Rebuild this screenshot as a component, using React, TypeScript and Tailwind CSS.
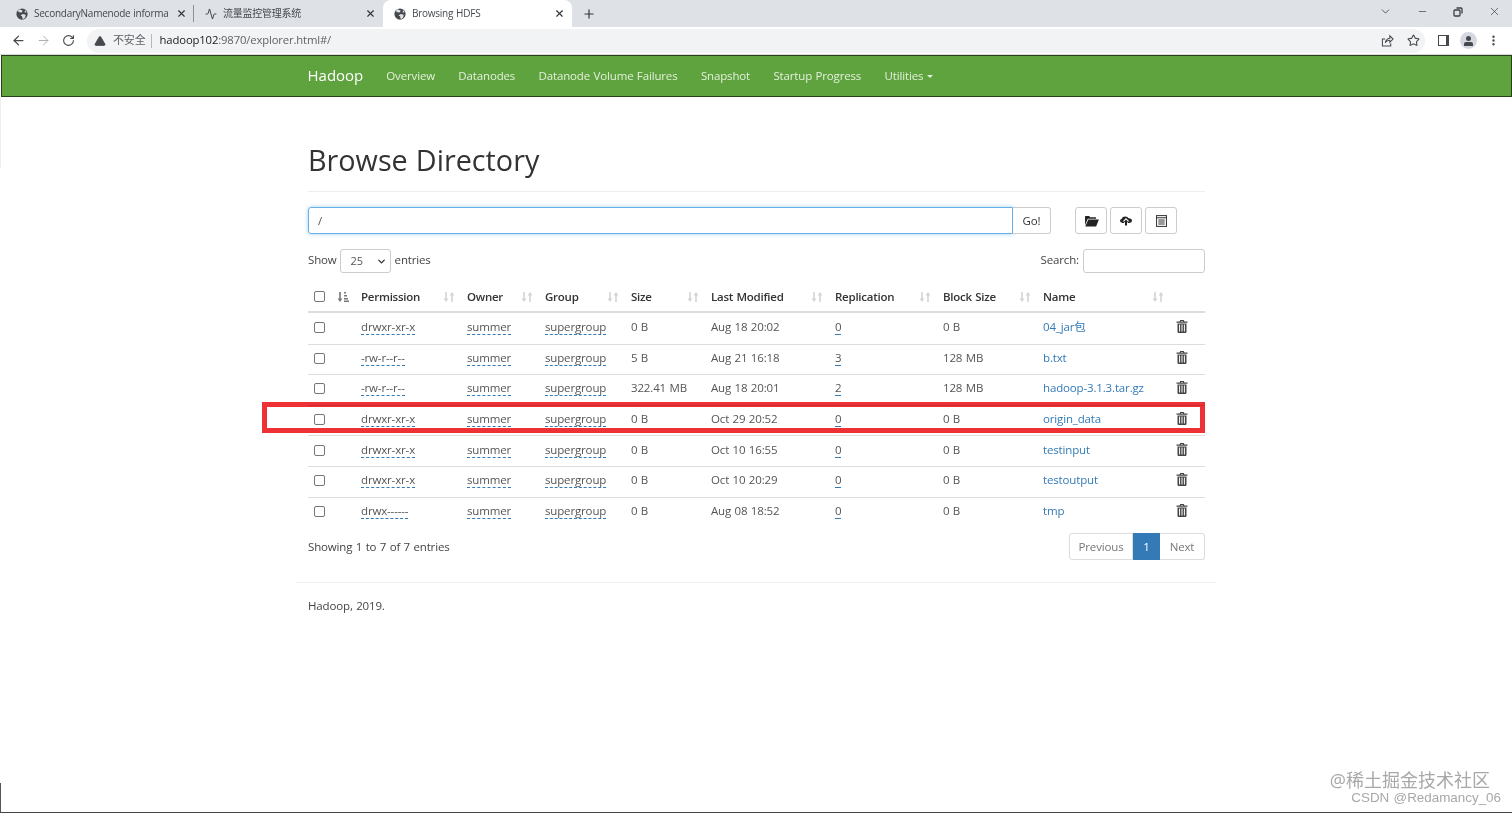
import React from 'react';
import { ArrowLeft, ArrowRight, RotateCw, TriangleAlert, Plus, X, ChevronDown, Minus, Star, EllipsisVertical, Activity } from 'lucide-react';

const files = [
  { perm: 'drwxr-xr-x', size: '0 B', modified: 'Aug 18 20:02', repl: '0', block: '0 B', name: '04_jar包' },
  { perm: '-rw-r--r--', size: '5 B', modified: 'Aug 21 16:18', repl: '3', block: '128 MB', name: 'b.txt' },
  { perm: '-rw-r--r--', size: '322.41 MB', modified: 'Aug 18 20:01', repl: '2', block: '128 MB', name: 'hadoop-3.1.3.tar.gz' },
  { perm: 'drwxr-xr-x', size: '0 B', modified: 'Oct 29 20:52', repl: '0', block: '0 B', name: 'origin_data' },
  { perm: 'drwxr-xr-x', size: '0 B', modified: 'Oct 10 16:55', repl: '0', block: '0 B', name: 'testinput' },
  { perm: 'drwxr-xr-x', size: '0 B', modified: 'Oct 10 20:29', repl: '0', block: '0 B', name: 'testoutput' },
  { perm: 'drwx------', size: '0 B', modified: 'Aug 08 18:52', repl: '0', block: '0 B', name: 'tmp' },
];

const columns = 'grid grid-cols-[45px_106px_78px_86px_80px_124px_108px_100px_133px_37px] items-center';

const Globe = () => (
  <svg viewBox="0 0 16 16" className="w-[12px] h-[12px] shrink-0">
    <circle cx="8" cy="8" r="7.5" fill="#45494e" />
    <path d="M5 1.5 9 3.5 7.5 6 4.5 5.5 2 4ZM9 8l4 1-1 4-3 2-1-4-2-1ZM12 2.5l2.5 3-3 .5Z" fill="#dee1e6" />
  </svg>
);

const Tab = ({ title, active, icon }: { title: string; active?: boolean; icon: React.ReactNode }) => (
  <div className={`w-[189px] h-[27px] flex items-center pl-[11px] pr-[7px] gap-[6px] ${active ? 'bg-white rounded-t-lg' : ''}`}>
    {icon}
    <span className="flex-1 -mr-[6px] text-[10px] tracking-[-0.25px] text-[#45494e] overflow-hidden whitespace-nowrap">{title}</span>
    <X size={11} strokeWidth={2.5} className="text-[#33363a] shrink-0" />
  </div>
);

const SortIcon = ({ active }: { active?: boolean }) => (
  <svg viewBox="0 0 12 12" className={`w-[12px] h-[12px] ${active ? 'text-[#777]' : 'text-[#d4d4d4]'}`} fill="currentColor">
    <path d="M2.2 1h1.6v6.5H5.4L3 11 .6 7.5h1.6Z" />
    {active ? (
      <path d="M7 1h2v1.5H7ZM7 4h3v1.5H7ZM7 7h4v1.5H7ZM7 9.6h5V11H7Z" />
    ) : (
      <path d="M8.2 11H9.8V4.5h1.6L9 1 6.6 4.5h1.6Z" />
    )}
  </svg>
);

const Trash = () => (
  <svg viewBox="0 0 12 13" className="w-[12px] h-[13px] text-[#444]" fill="currentColor">
    <path d="M4.2 0h3.6l.6 1.4H11.5v1.4H.5V1.4h3.1ZM5 .9l-.2.5h2.4L7 .9Z" />
    <path d="M1.5 3.4h9v8.4q0 1.2-1.2 1.2H2.7q-1.2 0-1.2-1.2ZM3.1 4.6v7h1v-7ZM5.5 4.6v7h1v-7ZM7.9 4.6v7h1v-7Z" fillRule="evenodd" />
  </svg>
);

const Dashed = ({ children }: { children: React.ReactNode }) => (
  <span className="border-b border-dashed border-[#337ab7] leading-[14px]">{children}</span>
);

const Checkbox = ({ className = '' }: { className?: string }) => (
  <span className={`block w-[11px] h-[11px] ml-[6px] rounded-[2px] border border-[#767676] bg-white ${className}`} />
);

const ToolButton = ({ children }: { children: React.ReactNode }) => (
  <button className="h-[27px] w-[32px] flex items-center justify-center rounded-[3px] border border-[#ccc] bg-white">
    {children}
  </button>
);

export default function App() {
  return (
    <div className="relative min-h-[813px] bg-white text-[11.5px] tracking-[-0.15px] [word-spacing:0.6px] text-[#333] font-['Open_Sans','Noto_Sans_CJK_SC',sans-serif] overflow-hidden">
      {/* Tab strip */}
      <div className="h-[27px] bg-[#dee1e6] flex items-center pl-[5px]">
        <Tab title="SecondaryNamenode informa" icon={<Globe />} />
        <div className="w-px h-[17px] bg-[#8d9095] -ml-[1px]" />
        <Tab title="流量监控管理系统" icon={<Activity size={12} className="text-[#45494e] shrink-0" />} />
        <Tab title="Browsing HDFS" active icon={<Globe />} />
        <Plus size={14} strokeWidth={2} className="text-[#33363a] ml-[10px]" />
        <div className="ml-auto flex items-center gap-[25px] pr-[11px] pb-[4px] text-[#3b3e42]">
          <ChevronDown size={13} strokeWidth={1.5} />
          <Minus size={11} strokeWidth={1.5} />
          <svg viewBox="0 0 10 10" className="w-[10px] h-[10px]" fill="none" stroke="currentColor" strokeWidth="1.3">
            <rect x="1" y="3" width="6" height="6" rx="1" />
            <path d="M3.5 1H8q1 0 1 1v4.5" />
          </svg>
          <X size={13} strokeWidth={1.3} />
        </div>
      </div>

      {/* Address bar */}
      <div className="h-[28px] bg-white border-b border-[#d5d7da] flex items-center pl-[11px] pr-[12px] text-[#5f6368]">
        <ArrowLeft size={15} strokeWidth={2} className="text-[#45494e]" />
        <ArrowRight size={15} strokeWidth={1.5} className="ml-[10px] text-[#a9abae]" />
        <RotateCw size={13} strokeWidth={2} className="ml-[11px] text-[#45494e]" />
        <div className="ml-[12px] w-[1338px] h-[24px] rounded-full bg-[#f1f3f4] flex items-center pl-[7px] pr-[5px]">
          <TriangleAlert size={12} fill="#45494e" strokeWidth={1.5} className="text-[#45494e]" />
          <span className="ml-[7px] text-[11px]">不安全</span>
          <span className="ml-[5px] mr-[8px] w-px h-[14px] bg-[#b5b7ba]" />
          <span className="text-[11.3px]"><span className="text-[#202124]">hadoop102</span>:9870/explorer.html#/</span>
          <div className="ml-auto flex items-center gap-[13px] text-[#45494e]">
            <svg viewBox="0 0 14 14" className="w-[13px] h-[13px]" fill="none" stroke="currentColor" strokeWidth="1.1">
              <path d="M4 6v-.5H1.5v7.5h9v-3" />
              <path d="M4.5 9.5C5 6 8 4.5 9.5 4.5V2L13 5.5 9.5 9V6.8C7.5 6.8 5.5 8 4.5 9.5Z" />
            </svg>
            <Star size={13} strokeWidth={2} />
          </div>
        </div>
        <div className="ml-[13px] w-[11px] h-[11px] border-[1.5px] border-[#45494e] flex justify-start">
          <div className="w-[7px] h-full bg-white" />
          <div className="flex-1 bg-[#45494e]" />
        </div>
        <div className="ml-[11px] w-[17px] h-[17px] rounded-full bg-[#d5d8e0] flex flex-col items-center justify-center">
          <span className="w-[5px] h-[5px] rounded-full bg-[#45494e]" />
          <span className="w-[9px] h-[4px] mt-px rounded-t-[2px] bg-[#45494e]" />
        </div>
        <EllipsisVertical size={13} strokeWidth={2.4} className="ml-[10px] text-[#45494e]" />
      </div>

      {/* Hadoop navbar */}
      <nav className="h-[42px] ml-px bg-[#5fa33e] border border-[#26401a] text-[#e4efdd]">
        <div className="w-[920px] mx-auto px-3 h-full flex items-center -translate-x-px">
          <span className="text-[15px] -mt-px tracking-normal text-white">Hadoop</span>
          <div className="ml-[23px] flex items-center gap-[23.4px]">
            <span>Overview</span>
            <span>Datanodes</span>
            <span>Datanode Volume Failures</span>
            <span>Snapshot</span>
            <span>Startup Progress</span>
            <span className="flex items-center gap-[4px]">
              Utilities
              <span className="border-x-[3px] border-x-transparent border-t-[3px] border-t-[#e4efdd]" />
            </span>
          </div>
        </div>
      </nav>

      <main className="w-[920px] mx-auto pl-3 pr-[11px]">
        <div className="pt-[41px] pb-[9px] border-b border-[#eee]">
          <h1 className="text-[28.75px] leading-[44px] tracking-normal text-[#333]">Browse Directory</h1>
        </div>

        {/* Path input and actions */}
        <div className="mt-[15px] flex items-center">
          <div className="w-[705px] h-[27px] rounded-l-[3px] border border-[#66afe9] shadow-[0_0_4px_rgba(102,175,233,0.6)] flex items-center pl-[9px] text-[#555]">
            /
          </div>
          <button className="w-[38px] h-[27px] rounded-r-[3px] border border-l-0 border-[#ccc] text-[#333] bg-white">Go!</button>
          <div className="ml-[24px] flex gap-[3px]">
            <ToolButton>
              <svg viewBox="0 0 16 13" className="w-[15px] h-[12px] text-[#222]" fill="currentColor">
                <path d="M1 3V1.5Q1 1 1.5 1h4l1 1.5h6q.5 0 .5.5v1H4L1 11Z" />
                <path d="M4.6 5H16l-3 7.5H1.3Z" />
              </svg>
            </ToolButton>
            <ToolButton>
              <svg viewBox="0 0 16 13" className="w-[12px] h-[12px] text-[#222]" fill="currentColor">
                <path d="M3.5 9Q0 9 0 6.2 0 4 2.2 3.7 3 .5 7 .5q3.4 0 4.4 2.4Q16 3 16 6.3 16 9 12.5 9H10.4V7h2.1L8 2.5 3.5 7h2.1v2Z" />
                <path d="M8 4.5 11 7.8H9.4V12.5H6.6V7.8H5Z" />
              </svg>
            </ToolButton>
            <ToolButton>
              <svg viewBox="0 0 12 13" className="w-[11px] h-[12px] text-[#333]" fill="none" stroke="currentColor">
                <rect x=".6" y=".6" width="10.8" height="11.8" strokeWidth="1.1" />
                <path d="M.6 3h10.8M2.5 5.5h7M2.5 7.7h7M2.5 9.9h7" strokeWidth="1.1" />
              </svg>
            </ToolButton>
          </div>
        </div>

        {/* Show entries / search */}
        <div className="mt-[15px] flex items-center justify-between text-[#444]">
          <div className="flex items-center">
            <span className="-mt-[2px]">Show</span>
            <div className="ml-[3px] mr-[4px] w-[51px] h-[24px] rounded-[3px] border border-[#ccc] flex items-center justify-between pl-[10px] pr-[3px] text-[11px] text-[#555]">
              25
              <ChevronDown size={11} strokeWidth={3} className="text-[#333]" />
            </div>
            <span className="-mt-[2px]">entries</span>
          </div>
          <div className="flex items-center gap-[4px]">
            <span className="-mt-[2px]">Search:</span>
            <div className="w-[122px] h-[24px] rounded-[3px] border border-[#ccc]" />
          </div>
        </div>

        {/* File table */}
        <div className="mt-[10px] w-[897px]">
          <div className={`${columns} h-[30px] border-b-2 border-[#ddd] font-semibold tracking-[-0.25px] text-[#333]`}>
            <div className="flex items-center justify-between pr-[4px] -mt-px">
              <Checkbox />
              <SortIcon active />
            </div>
            {['Permission', 'Owner', 'Group', 'Size', 'Last Modified', 'Replication', 'Block Size', 'Name'].map((h) => (
              <div key={h} className="pl-2 pr-[4px] flex items-center justify-between">
                {h}
                <SortIcon />
              </div>
            ))}
            <div />
          </div>
          {files.map((f, i) => (
            <div key={f.name} className={`${columns} h-[30.6px] pb-[4px] text-[#555] ${i > 0 ? 'border-t border-[#ddd]' : ''}`}>
              <Checkbox className="mt-[2px]" />
              <div className="pl-2"><Dashed>{f.perm}</Dashed></div>
              <div className="pl-2"><Dashed>summer</Dashed></div>
              <div className="pl-2"><Dashed>supergroup</Dashed></div>
              <div className="pl-2">{f.size}</div>
              <div className="pl-2">{f.modified}</div>
              <div className="pl-2"><Dashed>{f.repl}</Dashed></div>
              <div className="pl-2">{f.block}</div>
              <div className="pl-2 text-[#337ab7]">{f.name}</div>
              <div className="pl-[8px]"><Trash /></div>
            </div>
          ))}
        </div>

        {/* Info and pagination */}
        <div className="mt-[6px] flex items-center justify-between text-[#444]">
          <span>Showing 1 to 7 of 7 entries</span>
          <div className="flex items-center h-[27px] text-[#777]">
            <span className="h-full w-[64px] flex items-center justify-center rounded-l-[3px] border border-[#ddd]">Previous</span>
            <span className="h-full w-[27px] flex items-center justify-center bg-[#337ab7] text-white">1</span>
            <span className="h-full w-[45px] flex items-center justify-center rounded-r-[3px] border border-l-0 border-[#ddd]">Next</span>
          </div>
        </div>

        <div className="-ml-3 -mr-[11px] mt-[22px] border-t border-[#eee] px-3 pt-[14px] text-[#444]">Hadoop, 2019.</div>
      </main>

      {/* Red annotation over the origin_data row */}
      <div className="absolute left-[262px] top-[402px] w-[943px] h-[31px] border-[5px] border-[#ee3135] mix-blend-multiply" />

      {/* Watermarks */}
      <div className="absolute right-[22px] top-[769px] text-[18px] leading-[22px] tracking-normal text-[#a8a8a8]">@稀土掘金技术社区</div>
      <div className="absolute right-[11px] top-[790px] text-[13.4px] leading-[16px] tracking-normal text-[#a8a8a8] font-['Liberation_Sans',sans-serif]">CSDN @Redamancy_06</div>

      <div className="absolute left-0 top-[97px] h-[71px] w-px bg-[#eeeeee]" />
      <div className="absolute left-0 top-[783px] h-[30px] w-px bg-[#555]" />
      <div className="absolute left-0 right-0 bottom-0 h-px bg-[#444]" />
    </div>
  );
}
